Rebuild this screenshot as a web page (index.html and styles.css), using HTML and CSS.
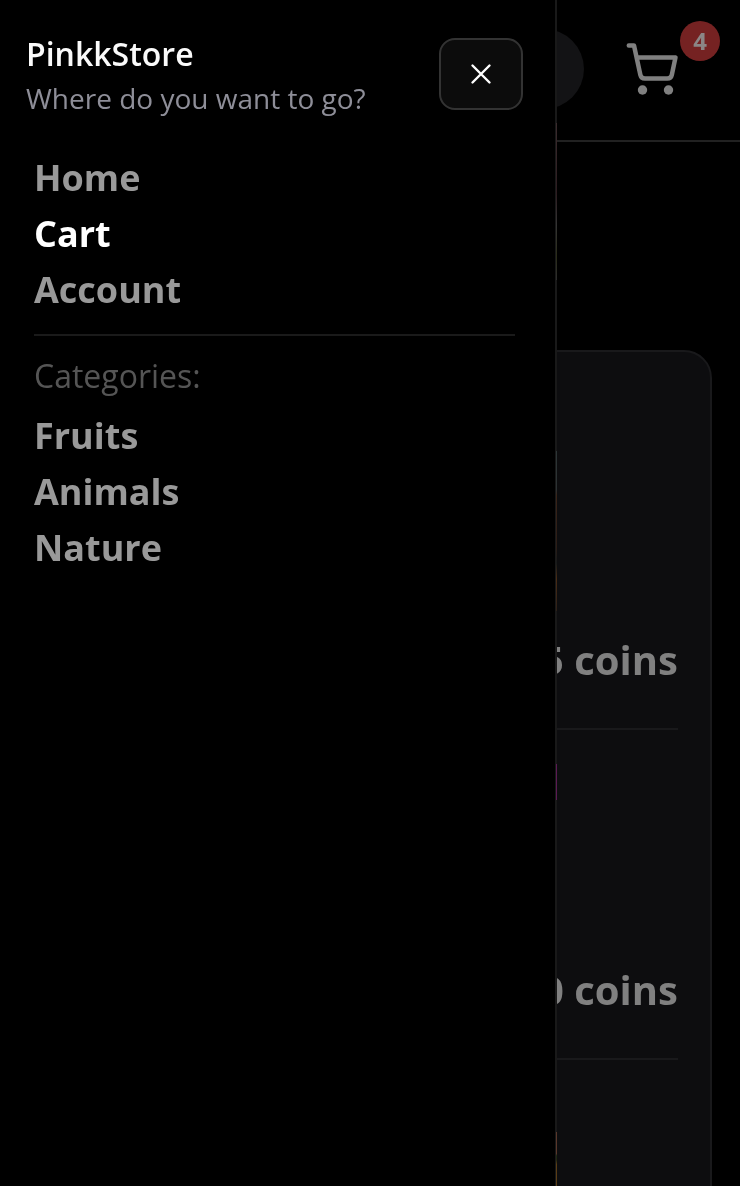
FILE: index.html
```html
<!DOCTYPE html>
<html lang="en">
<head>
<meta charset="utf-8">
<title>PinkkStore</title>
<link rel="stylesheet" href="styles.css">
</head>
<body>
<div class="page">
  <header class="topbar">
    <div class="search"></div>
    <div class="cart">
      <svg class="cart-icon" width="56" height="60" viewBox="0 0 56 60" fill="none" stroke="currentColor" stroke-width="4.5" stroke-linecap="round" stroke-linejoin="round">
        <path d="M4.8 5.6H10L16.4 35q.8 3.5 4.5 3.5H43.300q3.700 0 4.500-3.500L51.500 17.400H12.700"/>
        <circle cx="18.500" cy="50" r="4.700" fill="currentColor" stroke="none"/>
        <circle cx="44.500" cy="50" r="4.700" fill="currentColor" stroke="none"/>
      </svg>
      <span class="badge">4</span>
    </div>
  </header>
  <main class="card">
    <div class="item first"><span class="price">5 coins</span></div>
    <div class="item"><span class="price">0 coins</span></div>
    <div class="item"></div>
  </main>
</div>
<aside class="drawer">
  <div class="drawer-head">
    <div class="heading">
      <div class="title">PinkkStore</div>
      <div class="subtitle">Where do you want to go?</div>
    </div>
    <button class="close" aria-label="Close">
      <svg width="24" height="24" viewBox="0 0 24 24" fill="none" stroke="#fff" stroke-width="2.400" stroke-linecap="round"><path d="M3.500 3.500l17 17M20.500 3.500l-17 17"/></svg>
    </button>
  </div>
  <nav class="nav">
    <a class="link">Home</a>
    <a class="link active">Cart</a>
    <a class="link">Account</a>
    <div class="divider"></div>
    <div class="label">Categories:</div>
    <a class="link">Fruits</a>
    <a class="link">Animals</a>
    <a class="link">Nature</a>
  </nav>
  <i class="edge edge-banner"></i>
  <i class="edge edge-photo"></i>
  <i class="edge edge-purple"></i>
  <i class="edge edge-amber"></i>
</aside>
</body>
</html>
```
FILE: styles.css
```css
* { box-sizing: border-box; }
body {
  margin: 0;
  background: #000;
  font-family: "Open Sans", sans-serif;
  position: relative;
  height: 1186px;
  overflow: hidden;
}
.page { height: 1186px; overflow: hidden; }
.topbar {
  display: flex;
  justify-content: flex-end;
  height: 142px;
  padding: 29px 58px 0 0;
  border-bottom: 2px solid #212121;
}
.search {
  width: 200px;
  height: 80px;
  margin-right: 40px;
  border-radius: 40px;
  background: #131315;
}
.cart { position: relative; width: 58px; padding-top: 11px; color: #808080; }
.cart-icon { display: block; }
.badge {
  position: absolute;
  left: 56px;
  top: -8px;
  width: 40px;
  height: 40px;
  border-radius: 50%;
  background: #752222;
  color: #8b8585;
  font-size: 24px;
  font-weight: 700;
  line-height: 40px;
  text-align: center;
}
.card {
  margin: 208px 28px 0;
  height: 900px;
  padding: 0 32px;
  background: #0d0d0f;
  border: 2px solid #19191b;
  border-radius: 28px;
}
.item {
  display: flex;
  align-items: flex-end;
  justify-content: flex-end;
  height: 330px;
  padding-bottom: 38px;
  border-bottom: 2px solid #19191b;
}
.item.first { height: 378px; }
.price { color: #808080; font-size: 40px; font-weight: 700; line-height: 60px; }
.drawer {
  position: absolute;
  z-index: 1;
  left: 0;
  top: 0;
  width: 557px;
  height: 1186px;
  padding: 32px 32px 0 26px;
  background: #000;
  border-right: 2px solid #191919;
}
.heading, .nav, .price, .badge { will-change: opacity; }
.drawer-head { display: flex; justify-content: space-between; height: 118px; }
.title { color: #fafafa; font-size: 32px; font-weight: 600; line-height: 44px; }
.subtitle { color: #8e8e98; font-size: 28px; line-height: 44px; }
.close {
  display: flex;
  align-items: center;
  justify-content: center;
  width: 84px;
  height: 72px;
  margin-top: 6px;
  padding: 0;
  background: #0c0c0c;
  border: 2px solid #333;
  border-radius: 16px;
}
.nav { padding: 0 8px; }
.link { display: block; color: #999; font-size: 36px; font-weight: 700; line-height: 56px; }
.link.active { color: #fff; }
.divider { height: 2px; margin: 16px 0 16px; background: #1a1a1a; }
.label { color: #555; font-size: 32px; line-height: 48px; margin-bottom: 8px; }
/* Slivers of page imagery along the drawer's edge */
.edge { position: absolute; right: -2px; width: 1px; }
.edge-banner { top: 123px; height: 157px; background: linear-gradient(#3a2b2d, #2d1c20 45%, #343434 65%, #2a2c18 85%, #2d2d2d); }
.edge-photo { top: 451px; height: 160px; background: linear-gradient(#2c3536, #2c3233 24%, #3a2418 28%, #2c1d16 60%, #171a1a 70%, #4a2c14 80%, #2d2018); }
.edge-purple { top: 764px; height: 36px; background: #5c1a54; }
.edge-amber { top: 1132px; height: 54px; background: linear-gradient(#59372a 40%, #1c2a14 44%, #24280f 52%, #5a3d15 60%); }
```
